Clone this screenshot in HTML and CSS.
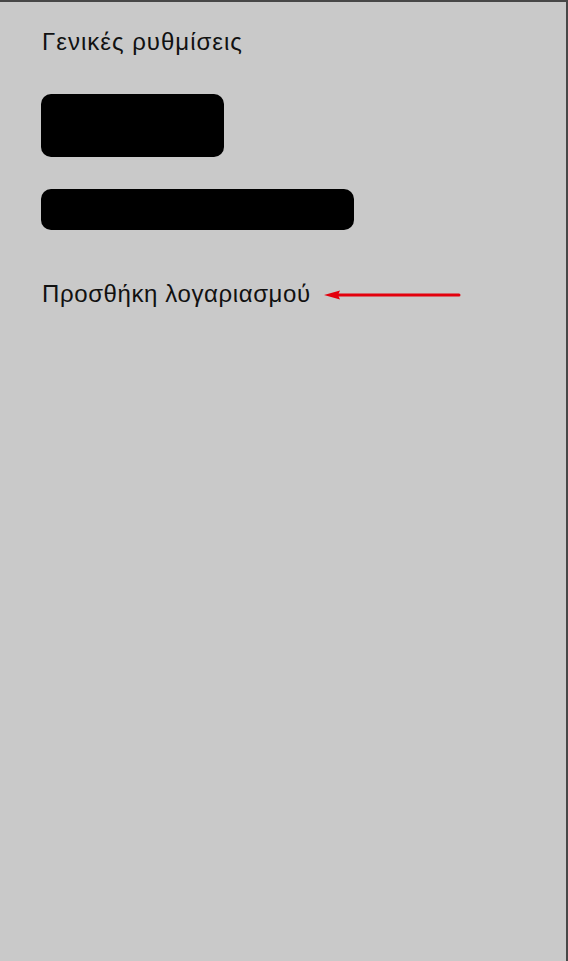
FILE: index.html
```html
<!DOCTYPE html>
<html lang="el">
<head>
<meta charset="utf-8">
<title>Γενικές ρυθμίσεις</title>
<link rel="stylesheet" href="styles.css">
</head>
<body>
<div class="screen">
  <h1 class="title">Γενικές ρυθμίσεις</h1>
  <div class="block block-short"></div>
  <div class="block block-long"></div>
  <div class="add-row">
    <span class="add-label">Προσθήκη λογαριασμού</span>
    <svg class="arrow" width="138" height="12" viewBox="0 0 138 12" aria-hidden="true">
      <line x1="10" y1="6" x2="135" y2="6" stroke="#e3000d" stroke-width="3" stroke-linecap="round"/>
      <polygon points="0,6 16,1.5 14,6 16,10.5" fill="#e3000d"/>
    </svg>
  </div>
</div>
</body>
</html>
```

FILE: styles.css
```css
html, body {
  margin: 0;
  padding: 0;
  height: 100%;
}
body {
  background: #c9c9c9;
  font-family: "Liberation Sans", Arial, sans-serif;
  color: #111;
}
.screen {
  box-sizing: border-box;
  height: 961px;
  border-top: 2px solid #474747;
  border-right: 2px solid #474747;
  padding: 26px 0 0 41px;
  display: flex;
  flex-direction: column;
  align-items: flex-start;
}
.title {
  margin: 0;
  font-size: 24px;
  font-weight: normal;
  line-height: 28px;
  letter-spacing: 1px;
  padding-left: 1px;
}
.block {
  background: #000;
  border-radius: 10px;
}
.block-short {
  width: 183px;
  height: 63px;
  margin-top: 38px;
}
.block-long {
  width: 313px;
  height: 41px;
  margin-top: 32px;
}
.add-row {
  margin-top: 50px;
  display: flex;
  align-items: center;
  gap: 13px;
  padding-left: 1px;
}
.add-label {
  font-size: 24px;
  line-height: 28px;
  letter-spacing: 0.6px;
}
.arrow {
  display: block;
  margin-top: 2px;
}
```
